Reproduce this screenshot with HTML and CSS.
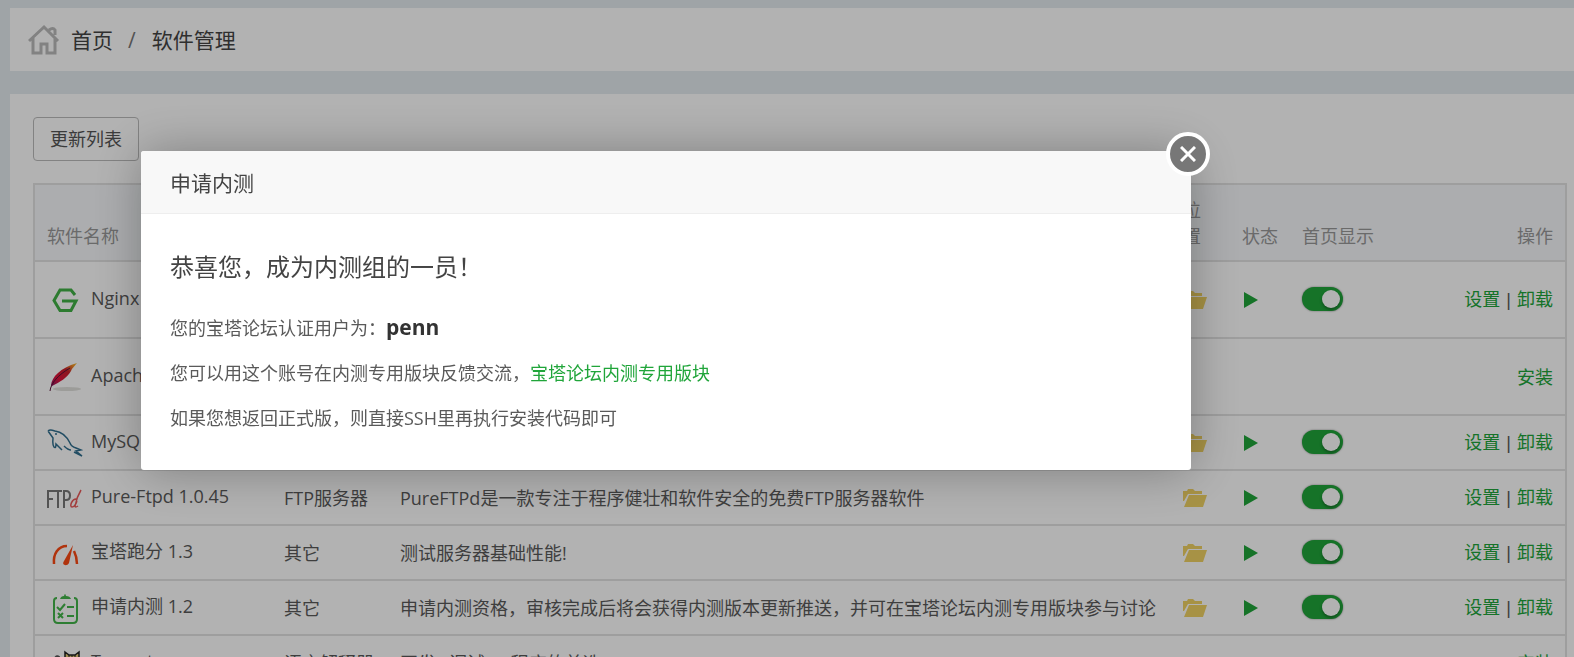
FILE: index.html
```html
<!DOCTYPE html>
<html lang="zh-CN">
  <head>
    <meta charset="UTF-8" />
    <meta name="viewport" content="width=device-width, initial-scale=1.0" />
    <title>软件管理</title>
    <link rel="stylesheet" href="styles.css">
  </head>
  <body>
    <svg class="sprite" aria-hidden="true">
      <symbol id="folder" viewBox="0 0 24 18">
        <path d="M0 12V2h4l1-2h5l2 2h7v3H5L1 12z" />
        <path d="M6 6h18l-4 12H1z" />
      </symbol>
      <symbol id="play" viewBox="0 0 14 16">
        <path d="M0 0l14 8-14 8z" />
      </symbol>
    </svg>

    <nav class="topbar">
      <svg class="home" viewBox="0 0 32 32" aria-hidden="true">
        <path d="M1 17L16 3l14 14M5 14v15h8v-9h6v9h8V14M21 6q4-3 6 0v5" />
      </svg>
      <a href="#">首页</a>
      <span class="slash">/</span>
      <span>软件管理</span>
    </nav>

    <main class="panel">
      <button class="btn-update" type="button">更新列表</button>
      <table>
        <colgroup>
          <col class="col-name">
          <col class="col-type">
          <col>
          <col class="col-path">
          <col class="col-status">
          <col class="col-show">
          <col class="col-action">
        </colgroup>
        <thead>
          <tr>
            <th>软件名称</th>
            <th></th>
            <th></th>
            <th>位置</th>
            <th class="nowrap">状态</th>
            <th>首页显示</th>
            <th class="action">操作</th>
          </tr>
        </thead>
        <tbody>
          <tr class="tall">
            <td>
              <div class="name">
                <svg viewBox="0 0 36 32" aria-hidden="true">
                  <path d="M28 11l-4-5H13L7 16.500l6 10h11l5-9.500H15" fill="none" stroke="#41b146" stroke-width="3" />
                </svg>
                <span>Nginx</span>
              </div>
            </td>
            <td></td>
            <td></td>
            <td><svg class="folder"><use href="#folder" /></svg></td>
            <td><svg class="play"><use href="#play" /></svg></td>
            <td><input class="switch" type="checkbox" aria-label="Nginx 首页显示" checked></td>
            <td class="action"><a href="#">设置</a><span class="sep">|</span><a href="#">卸载</a></td>
          </tr>
          <tr class="tall">
            <td>
              <div class="name">
                <svg viewBox="0 0 36 32" aria-hidden="true">
                  <defs>
                    <linearGradient id="feather" x1="0" y1="1" x2="1" y2="0">
                      <stop offset="0" stop-color="#8a1a66" />
                      <stop offset=".3" stop-color="#e0123a" />
                      <stop offset=".65" stop-color="#c8232c" />
                      <stop offset=".85" stop-color="#ee8a24" />
                      <stop offset="1" stop-color="#f5c431" />
                    </linearGradient>
                  </defs>
                  <ellipse cx="20" cy="28" rx="14" ry="2" fill="#e0e0dc" />
                  <path d="M4 24C5 16 13 7 30 2c-3 4-5 5-6 8-4 7-11 11-19 15z" fill="url(#feather)" />
                  <path d="M3 30c1-8 8-16 20-23" fill="none" stroke="#5a1238" />
                </svg>
                <span>Apache</span>
              </div>
            </td>
            <td></td>
            <td></td>
            <td></td>
            <td></td>
            <td></td>
            <td class="action"><a href="#">安装</a></td>
          </tr>
          <tr>
            <td>
              <div class="name">
                <svg viewBox="0 0 36 32" aria-hidden="true">
                  <path d="M1 4c2-2 4-1 7 0 8 1 12 6 15 12 1 3 3 4 6 5l5 2-5 1 6 5-8-4M1 4l5 7c0 3-1 6 1 9q2 2 2-3l6 6M24 23c-3 0-5-2-7-4" fill="none" stroke="#316f8f" stroke-width="1.500" />
                  <circle cx="9" cy="7" r="1" fill="#316f8f" />
                </svg>
                <span>MySQL</span>
              </div>
            </td>
            <td></td>
            <td></td>
            <td><svg class="folder"><use href="#folder" /></svg></td>
            <td><svg class="play"><use href="#play" /></svg></td>
            <td><input class="switch" type="checkbox" aria-label="MySQL 首页显示" checked></td>
            <td class="action"><a href="#">设置</a><span class="sep">|</span><a href="#">卸载</a></td>
          </tr>
          <tr>
            <td>
              <div class="name">
                <svg viewBox="0 0 36 32" aria-hidden="true">
                  <path d="M1 26V9h6M1 17h5M7 9h8M11 9v17M17 26V9h2q4 0 4 4.500T19 18h-2" fill="none" stroke="#777" stroke-width="2" />
                  <path d="M34 8c-3 5-5 10-6 16q0 2 3 0M30 17c-5-1-8 8-5 8 2 0 4-3 5-6" fill="none" stroke="#e85a5a" stroke-width="1.500" />
                </svg>
                <span>Pure-Ftpd 1.0.45</span>
              </div>
            </td>
            <td>FTP服务器</td>
            <td>PureFTPd是一款专注于程序健壮和软件安全的免费FTP服务器软件</td>
            <td><svg class="folder"><use href="#folder" /></svg></td>
            <td><svg class="play"><use href="#play" /></svg></td>
            <td><input class="switch" type="checkbox" aria-label="Pure-Ftpd 首页显示" checked></td>
            <td class="action"><a href="#">设置</a><span class="sep">|</span><a href="#">卸载</a></td>
          </tr>
          <tr>
            <td>
              <div class="name">
                <svg viewBox="0 0 36 32" aria-hidden="true">
                  <path d="M7 27C6 17 11 9 20 9M27 14c2 4 3 8 3 13" fill="none" stroke="#fc4a14" stroke-width="2.500" />
                  <path d="M26 8l-4 18c-2 4-8 2-5-2z" fill="#fc4a14" />
                </svg>
                <span>宝塔跑分 1.3</span>
              </div>
            </td>
            <td>其它</td>
            <td>测试服务器基础性能!</td>
            <td><svg class="folder"><use href="#folder" /></svg></td>
            <td><svg class="play"><use href="#play" /></svg></td>
            <td><input class="switch" type="checkbox" aria-label="宝塔跑分 首页显示" checked></td>
            <td class="action"><a href="#">设置</a><span class="sep">|</span><a href="#">卸载</a></td>
          </tr>
          <tr>
            <td>
              <div class="name">
                <svg viewBox="0 0 36 32" aria-hidden="true">
                  <path d="M10 6Q7 6 7 9v18q0 4 4 4h15q4 0 4-4V9q0-3-3-3M10 15l3 3 5-6M20 15h7M11 21l5 5M16 21l-5 5M20 24h7" fill="none" stroke="#43b549" stroke-width="2" />
                  <path d="M13 7q1-3 4-3 1-4 2 0 4 0 5 3z" fill="#43b549" />
                </svg>
                <span>申请内测 1.2</span>
              </div>
            </td>
            <td>其它</td>
            <td>申请内测资格，审核完成后将会获得内测版本更新推送，并可在宝塔论坛内测专用版块参与讨论</td>
            <td><svg class="folder"><use href="#folder" /></svg></td>
            <td><svg class="play"><use href="#play" /></svg></td>
            <td><input class="switch" type="checkbox" aria-label="申请内测 首页显示" checked></td>
            <td class="action"><a href="#">设置</a><span class="sep">|</span><a href="#">卸载</a></td>
          </tr>
          <tr>
            <td>
              <div class="name">
                <svg viewBox="0 0 36 32" aria-hidden="true">
                  <path d="M18 5l4 3h6l4-3v16H18z" fill="#e3c873" stroke="#222" stroke-width="1.500" />
                  <path d="M22 8v3M25 8v3M28 8v3" stroke="#222" />
                  <path d="M8 11q2-3 4-1v8" fill="none" stroke="#555" stroke-width="2" />
                </svg>
                <span>Tomcat</span>
              </div>
            </td>
            <td>语言解释器</td>
            <td>开发&amp;调试JSP程序的首选</td>
            <td></td>
            <td></td>
            <td></td>
            <td class="action"><a href="#">安装</a></td>
          </tr>
        </tbody>
      </table>
    </main>

    <div class="shade"></div>

    <div class="modal" role="dialog" aria-labelledby="modal-title">
      <div class="modal-title" id="modal-title">申请内测</div>
      <button class="modal-close" type="button" aria-label="关闭">
        <svg viewBox="0 0 16 16" aria-hidden="true"><path d="M1 1l14 14M15 1L1 15" /></svg>
      </button>
      <div class="modal-body">
        <h3>恭喜您，成为内测组的一员！</h3>
        <p>您的宝塔论坛认证用户为：<b>penn</b></p>
        <p>您可以用这个账号在内测专用版块反馈交流，<a href="#">宝塔论坛内测专用版块</a></p>
        <p>如果您想返回正式版，则直接SSH里再执行安装代码即可</p>
      </div>
    </div>
  </body>
</html>
```
FILE: styles.css
```css
* {
  box-sizing: border-box;
}
body {
  margin: 0;
  padding: 8px 0 0 10px;
  height: 100vh;
  overflow: hidden;
  background: #e4ebef;
  color: #5a5a5a;
  font: 18px/26px "Open Sans", "Noto Sans CJK SC", sans-serif;
}
a {
  color: #20a53a;
  text-decoration: none;
}
.sprite {
  display: none;
}
.topbar {
  display: flex;
  align-items: center;
  padding: 16px 18px 15px;
  background: #fff;
  color: #444;
  font-size: 21px;
}
.topbar a {
  color: #444;
}
.home {
  width: 32px;
  height: 32px;
  margin-right: 11px;
  fill: none;
  stroke: #bbb;
  stroke-width: 3;
}
.slash {
  margin: 0 16px 0 15px;
  color: #777;
}
.panel {
  margin-top: 23px;
  padding: 23px 7px 23px 23px;
  background: #fff;
}
.btn-update {
  display: block;
  height: 44px;
  padding: 0 16px;
  margin-bottom: 22px;
  border: 1px solid #bbb;
  border-radius: 4px;
  background: #fff;
  color: #555;
  font: inherit;
}
table {
  width: 100%;
  table-layout: fixed;
  border-collapse: collapse;
  border: 2px solid #e2e2e2;
}
.col-name {
  width: 238px;
}
.col-type {
  width: 116px;
}
.col-path {
  width: 59px;
}
.col-status {
  width: 60px;
}
.col-show {
  width: 150px;
}
.col-action {
  width: 126px;
}
th,
td {
  padding: 0 12px;
  text-align: left;
  vertical-align: middle;
  border-bottom: 2px solid #e2e2e2;
}
th {
  padding-top: 12px;
  padding-bottom: 11px;
  background: #f6f8fb;
  color: #999;
  font-weight: normal;
  vertical-align: bottom;
}
td {
  height: 55px;
}
.tall td {
  height: 77px;
}
.nowrap {
  white-space: nowrap;
}
th.action,
td.action {
  padding-left: 0;
  text-align: right;
  white-space: nowrap;
}
.sep {
  margin: 0 6px;
  font-family: "Liberation Sans", sans-serif;
}
.name {
  display: flex;
  align-items: center;
  white-space: nowrap;
}
.name svg {
  flex: none;
  width: 36px;
  height: 32px;
  margin-right: 8px;
}
.name span {
  padding-bottom: 4px;
}
.folder {
  display: block;
  width: 24px;
  height: 18px;
  fill: #f0d264;
}
.play {
  display: block;
  width: 14px;
  height: 16px;
  margin-left: 2px;
  fill: #20a53a;
}
.switch {
  appearance: none;
  display: flex;
  align-items: center;
  justify-content: flex-end;
  width: 41px;
  height: 24px;
  margin: 0 0 2px;
  padding: 3px;
  border-radius: 12px;
  background: #20a53a;
  box-shadow: 0 0 2px #888;
}
.switch::before {
  content: "";
  width: 18px;
  height: 18px;
  border-radius: 50%;
  background: #fff;
  box-shadow: 0 2px 3px rgba(0, 0, 0, 0.3);
}
.shade {
  position: fixed;
  inset: 0;
  background: rgba(0, 0, 0, 0.3);
}
.modal {
  position: fixed;
  top: 151px;
  left: 141px;
  width: 1050px;
  max-width: 80%;
  border-radius: 3px;
  background: #fff;
  box-shadow: 1px 1px 50px rgba(0, 0, 0, 0.3);
}
.modal-title {
  padding: 19px 29px 17px;
  border-bottom: 1px solid #eee;
  border-radius: 3px 3px 0 0;
  background: #f8f8f8;
  color: #444;
  font-size: 21px;
}
.modal-close {
  position: absolute;
  top: -19px;
  right: -19px;
  display: flex;
  align-items: center;
  justify-content: center;
  width: 44px;
  height: 44px;
  padding: 0;
  border: 4px solid #fff;
  border-radius: 50%;
  background: #777;
}
.modal-close svg {
  width: 16px;
  height: 16px;
  fill: none;
  stroke: #fff;
  stroke-width: 3;
}
.modal-body {
  padding: 40px 29px 39px;
}
.modal-body h3 {
  margin: 0 0 34px;
  color: #444;
  font-size: 24px;
  font-weight: normal;
}
.modal-body p {
  margin: 0 0 19px;
}
.modal-body p:last-child {
  margin-bottom: 0;
}
.modal-body b {
  color: #333;
  font-size: 21px;
}
```
